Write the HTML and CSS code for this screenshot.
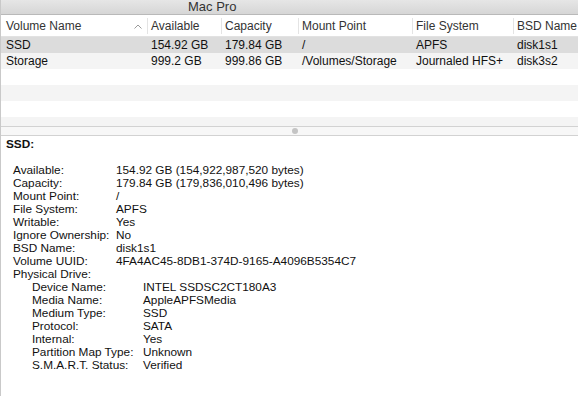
FILE: index.html
```html
<!DOCTYPE html>
<html lang="en">
<head>
    <meta charset="UTF-8">
    <title>Mac Pro</title>
    <link rel="stylesheet" href="styles.css">
</head>
<body>
    <div class="window">
        <div class="titlebar"><span class="title">Mac Pro</span></div>

        <!-- Список томов -->
        <div class="list">
            <div class="row head">
                <div class="cell c1">Volume Name
                    <svg class="sort" width="8" height="5" viewBox="0 0 8 5"><path d="M0.5 4.5 L4 1 L7.5 4.5" fill="none" stroke="#9a9a9a" stroke-width="1"/></svg>
                </div>
                <div class="cell c2">Available</div>
                <div class="cell c3">Capacity</div>
                <div class="cell c4">Mount Point</div>
                <div class="cell c5">File System</div>
                <div class="cell c6">BSD Name</div>
            </div>
            <div class="row selected">
                <div class="cell c1">SSD</div>
                <div class="cell c2">154.92 GB</div>
                <div class="cell c3">179.84 GB</div>
                <div class="cell c4">/</div>
                <div class="cell c5">APFS</div>
                <div class="cell c6">disk1s1</div>
            </div>
            <div class="row alt">
                <div class="cell c1">Storage</div>
                <div class="cell c2">999.2 GB</div>
                <div class="cell c3">999.86 GB</div>
                <div class="cell c4">/Volumes/Storage</div>
                <div class="cell c5">Journaled HFS+</div>
                <div class="cell c6">disk3s2</div>
            </div>
            <div class="row"></div>
            <div class="row alt"></div>
            <div class="row"></div>
            <div class="row alt short"></div>
        </div>

        <div class="splitter"><span class="grip"></span></div>

        <!-- Подробности выбранного тома -->
        <div class="details">
            <div class="heading">SSD:</div>
            <div class="props">
                <div class="prop"><span class="key">Available:</span><span>154.92 GB (154,922,987,520 bytes)</span></div>
                <div class="prop"><span class="key">Capacity:</span><span>179.84 GB (179,836,010,496 bytes)</span></div>
                <div class="prop"><span class="key">Mount Point:</span><span>/</span></div>
                <div class="prop"><span class="key">File System:</span><span>APFS</span></div>
                <div class="prop"><span class="key">Writable:</span><span>Yes</span></div>
                <div class="prop"><span class="key">Ignore Ownership:</span><span>No</span></div>
                <div class="prop"><span class="key">BSD Name:</span><span>disk1s1</span></div>
                <div class="prop"><span class="key">Volume UUID:</span><span>4FA4AC45-8DB1-374D-9165-A4096B5354C7</span></div>
                <div class="prop"><span class="key">Physical Drive:</span></div>
                <div class="props sub">
                    <div class="prop"><span class="key">Device Name:</span><span>INTEL SSDSC2CT180A3</span></div>
                    <div class="prop"><span class="key">Media Name:</span><span>AppleAPFSMedia</span></div>
                    <div class="prop"><span class="key">Medium Type:</span><span>SSD</span></div>
                    <div class="prop"><span class="key">Protocol:</span><span>SATA</span></div>
                    <div class="prop"><span class="key">Internal:</span><span>Yes</span></div>
                    <div class="prop"><span class="key">Partition Map Type:</span><span>Unknown</span></div>
                    <div class="prop"><span class="key">S.M.A.R.T. Status:</span><span>Verified</span></div>
                </div>
            </div>
        </div>
    </div>
</body>
</html>
```

FILE: styles.css
```css
/* Основные стили */
body {
    margin: 0;
    font-family: 'Liberation Sans', Arial, sans-serif;
    color: #111;
    background-color: #fff;
}
.window {
    width: 578px;
    height: 396px;
    overflow: hidden;
    border-left: 1px solid #c9c9c9;
    box-sizing: border-box;
}
.titlebar {
    height: 14px;
    background: linear-gradient(#e6e6e6, #d6d6d6);
    border-bottom: 1px solid #b9b9b9;
    padding-left: 187px;
    font-size: 13px;
    line-height: 13px;
    color: #333;
}

/* Таблица томов */
.row {
    display: flex;
    height: 16px;
    font-size: 12px;
    line-height: 16px;
}
.row.head {
    height: 21px;
    line-height: 21px;
    border-bottom: 1px solid #e2e2e2;
    color: #333;
}
.row.selected {
    background-color: #dcdcdc;
}
.row.alt {
    background-color: #f4f4f4;
}
.row.short {
    height: 9px;
}
.cell {
    box-sizing: border-box;
    padding-left: 3px;
    border-left: 1px solid transparent;
    white-space: nowrap;
    overflow: hidden;
}
.head .cell {
    border-left-color: #e4e4e4;
    margin: 3px 0 2px;
    line-height: 16px;
}
.head .c1 {
    border-left-color: transparent;
    display: flex;
    justify-content: space-between;
    align-items: center;
    padding-right: 5px;
}
.c1 { width: 146px; padding-left: 4px; }
.c2 { width: 74px; }
.c3 { width: 77px; }
.c4 { width: 114px; }
.c5 { width: 101px; }
.c6 { flex: 1; }
.sort {
    margin-top: 1px;
}

/* Разделитель */
.splitter {
    height: 8px;
    background-color: #f7f7f7;
    border-top: 1px solid #d2d2d2;
    border-bottom: 1px solid #d2d2d2;
    display: flex;
    justify-content: center;
    align-items: center;
}
.grip {
    width: 6px;
    height: 6px;
    border-radius: 50%;
    background-color: #c4c4c4;
    margin-left: 10px;
}

/* Подробности */
.details {
    padding: 1px 0 0 5px;
    font-size: 11.8px;
}
.heading {
    font-weight: bold;
    line-height: 14px;
    margin-bottom: 12.5px;
}
.props {
    padding-left: 7px;
}
.props.sub {
    padding-left: 19px;
}
.prop {
    display: flex;
    line-height: 13px;
}
.prop .key {
    width: 103px;
    flex-shrink: 0;
}
.sub .prop .key {
    width: 111px;
}
```
